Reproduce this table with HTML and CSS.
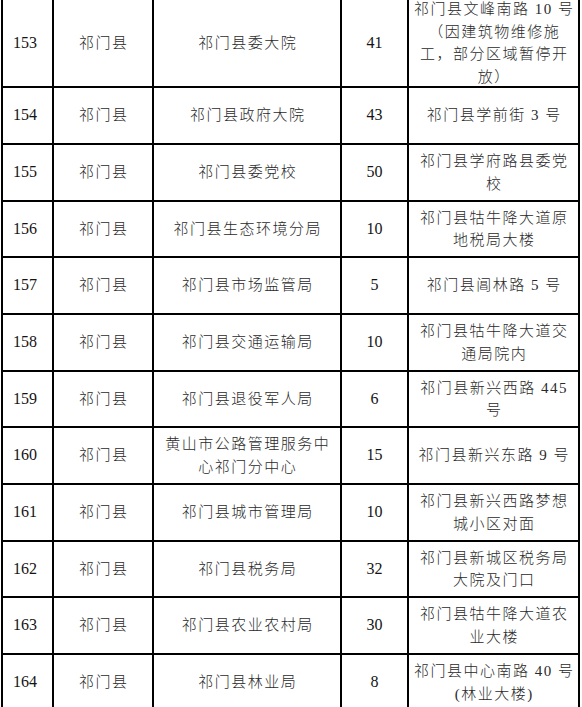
FILE: index.html
```html
<!DOCTYPE html>
<html lang="zh-CN">
<head>
<meta charset="utf-8">
<title>祁门县</title>
<link rel="stylesheet" href="styles.css">
</head>
<body>
<div class="table">
  <div class="c num">153</div><div class="c">祁门县</div><div class="c">祁门县委大院</div><div class="c num">41</div><div class="c">祁门县文峰南路 10 号<br>（因建筑物维修施<br>工，部分区域暂停开<br>放）</div>
  <div class="c num">154</div><div class="c">祁门县</div><div class="c">祁门县政府大院</div><div class="c num">43</div><div class="c">祁门县学前街 3 号</div>
  <div class="c num">155</div><div class="c">祁门县</div><div class="c">祁门县委党校</div><div class="c num">50</div><div class="c">祁门县学府路县委党<br>校</div>
  <div class="c num">156</div><div class="c">祁门县</div><div class="c">祁门县生态环境分局</div><div class="c num">10</div><div class="c">祁门县牯牛降大道原<br>地税局大楼</div>
  <div class="c num">157</div><div class="c">祁门县</div><div class="c">祁门县市场监管局</div><div class="c num">5</div><div class="c">祁门县阊林路 5 号</div>
  <div class="c num">158</div><div class="c">祁门县</div><div class="c">祁门县交通运输局</div><div class="c num">10</div><div class="c">祁门县牯牛降大道交<br>通局院内</div>
  <div class="c num">159</div><div class="c">祁门县</div><div class="c">祁门县退役军人局</div><div class="c num">6</div><div class="c">祁门县新兴西路 445<br>号</div>
  <div class="c num">160</div><div class="c">祁门县</div><div class="c">黄山市公路管理服务中<br>心祁门分中心</div><div class="c num">15</div><div class="c">祁门县新兴东路 9 号</div>
  <div class="c num">161</div><div class="c">祁门县</div><div class="c">祁门县城市管理局</div><div class="c num">10</div><div class="c">祁门县新兴西路梦想<br>城小区对面</div>
  <div class="c num">162</div><div class="c">祁门县</div><div class="c">祁门县税务局</div><div class="c num">32</div><div class="c">祁门县新城区税务局<br>大院及门口</div>
  <div class="c num">163</div><div class="c">祁门县</div><div class="c">祁门县农业农村局</div><div class="c num">30</div><div class="c">祁门县牯牛降大道农<br>业大楼</div>
  <div class="c num">164</div><div class="c">祁门县</div><div class="c">祁门县林业局</div><div class="c num">8</div><div class="c">祁门县中心南路 40 号<br>(林业大楼)</div>
</div>
</body>
</html>
```

FILE: styles.css
```css
html, body {
  margin: 0;
  padding: 0;
  background: #ffffff;
}

body {
  overflow: hidden;
}

.table {
  display: grid;
  grid-template-columns: 49px 98px 186px 65px 169px;
  grid-template-rows: 86px 55px 55px 54px 55px 55px 54px 55px 55px 54px 55px 55px;
  gap: 2px;
  padding: 0 2px 2px 2px;
  margin-left: 1px;
  width: 575px;
  background: #000000;
}

.c {
  background: #ffffff;
  display: flex;
  align-items: center;
  justify-content: center;
  text-align: center;
  white-space: nowrap;
  font-family: "Liberation Serif", "Noto Sans CJK SC", serif;
  font-size: 15px;
  font-weight: 300;
  line-height: 22.5px;
  letter-spacing: 1.5px;
  padding-left: 1.5px;
  color: #2a2a2a;
}

.num {
  font-size: 16px;
  font-weight: 400;
  letter-spacing: 0;
  padding-left: 0;
  color: #141414;
}

.c.num:nth-child(5n+1) {
  padding-right: 5px;
}
```
